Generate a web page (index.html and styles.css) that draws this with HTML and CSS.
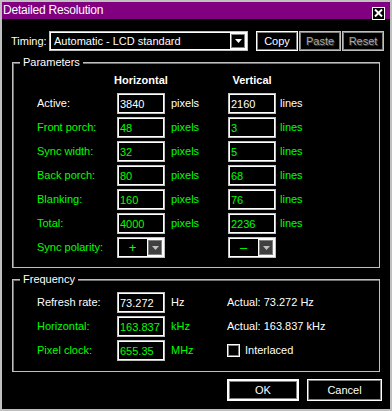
FILE: index.html
```html
<!DOCTYPE html>
<html lang="en">
  <head>
    <meta charset="UTF-8" />
    <title>Detailed Resolution</title>
    <link rel="stylesheet" href="styles.css">
  </head>
  <body>
    <div class="titlebar">
      <span class="title">Detailed Resolution</span>
      <button class="close">
        <svg width="9" height="8" viewBox="0 0 9 8"><path d="M1 0.5 L8 7.5 M8 0.5 L1 7.5" stroke="#fff" stroke-width="2"/></svg>
      </button>
    </div>

    <div class="timing">
      <span class="timing-label">Timing:</span>
      <div class="select">
        <span>Automatic - LCD standard</span>
        <span class="drop white"><svg width="7" height="4" viewBox="0 0 7 4"><path d="M0 0 H7 L3.5 4 Z" fill="#fff"/></svg></span>
      </div>
      <div class="tools">
        <button class="btn">Copy</button>
        <button class="btn disabled">Paste</button>
        <button class="btn disabled">Reset</button>
      </div>
    </div>

    <div class="group params">
      <span class="legend">Parameters</span>
      <div class="grid">
        <span></span>
        <span class="head">Horizontal</span>
        <span></span>
        <span class="head">Vertical</span>
        <span></span>

        <span class="label">Active:</span>
        <span class="field">3840</span>
        <span class="unit">pixels</span>
        <span class="field">2160</span>
        <span class="unit lines">lines</span>

        <span class="label green">Front porch:</span>
        <span class="field green">48</span>
        <span class="unit green">pixels</span>
        <span class="field green">3</span>
        <span class="unit lines green">lines</span>

        <span class="label green">Sync width:</span>
        <span class="field green">32</span>
        <span class="unit green">pixels</span>
        <span class="field green">5</span>
        <span class="unit lines green">lines</span>

        <span class="label green">Back porch:</span>
        <span class="field green">80</span>
        <span class="unit green">pixels</span>
        <span class="field green">68</span>
        <span class="unit lines green">lines</span>

        <span class="label green">Blanking:</span>
        <span class="field green">160</span>
        <span class="unit green">pixels</span>
        <span class="field green">76</span>
        <span class="unit lines green">lines</span>

        <span class="label green">Total:</span>
        <span class="field green">4000</span>
        <span class="unit green">pixels</span>
        <span class="field green">2236</span>
        <span class="unit lines green">lines</span>

        <span class="label green">Sync polarity:</span>
        <div class="combo green">
          <span class="combo-val">+</span>
          <span class="drop grey"><svg width="7" height="4" viewBox="0 0 7 4"><path d="M0 0 H7 L3.5 4 Z" fill="#c0c0c0"/></svg></span>
        </div>
        <span></span>
        <div class="combo green">
          <span class="combo-val">&ndash;</span>
          <span class="drop grey"><svg width="7" height="4" viewBox="0 0 7 4"><path d="M0 0 H7 L3.5 4 Z" fill="#c0c0c0"/></svg></span>
        </div>
        <span></span>
      </div>
    </div>

    <div class="group freq">
      <span class="legend">Frequency</span>
      <div class="grid freq-grid">
        <span class="label">Refresh rate:</span>
        <span class="field">73.272</span>
        <span class="unit">Hz</span>
        <span class="actual">Actual: 73.272 Hz</span>

        <span class="label green">Horizontal:</span>
        <span class="field green">163.837</span>
        <span class="unit green">kHz</span>
        <span class="actual">Actual: 163.837 kHz</span>

        <span class="label green">Pixel clock:</span>
        <span class="field green">655.35</span>
        <span class="unit green">MHz</span>
        <label class="actual check"><span class="box"></span>Interlaced</label>
      </div>
    </div>

    <div class="actions">
      <button class="btn ok">OK</button>
      <button class="btn cancel">Cancel</button>
    </div>
  </body>
</html>
```

FILE: styles.css
```css
body {
  margin: 0;
  width: 392px;
  height: 411px;
  box-sizing: border-box;
  border: 2px solid #c0c0c0;
  background: #000;
  color: #fff;
  font-family: "Liberation Sans", Arial, sans-serif;
  font-size: 11px;
  line-height: 13px;
}

button {
  font: inherit;
  color: inherit;
  background: #000;
  padding: 0;
}

.green {
  color: #00ff00;
}

.titlebar {
  height: 17px;
  background: #800080;
  display: flex;
  align-items: center;
  justify-content: space-between;
  padding: 0 5px 0 1px;
}

.title {
  font-size: 12px;
  letter-spacing: -0.2px;
}

.close {
  width: 13px;
  height: 13px;
  border: 1px solid #fff;
  display: flex;
  align-items: center;
  justify-content: center;
  margin-top: 5px;
}

.timing {
  display: flex;
  align-items: center;
  margin-top: 12px;
  padding-left: 9px;
  height: 20px;
}

.timing-label {
  width: 38px;
}

.select {
  width: 199px;
  height: 20px;
  box-sizing: border-box;
  border: 1px solid #c0c0c0;
  box-shadow: inset 0 0 0 1px #fff;
  display: flex;
  align-items: center;
  justify-content: space-between;
  padding: 0 1px 0 4px;
}

.drop {
  width: 16px;
  height: 16px;
  box-sizing: border-box;
  display: flex;
  align-items: center;
  justify-content: center;
}

.drop.white {
  border: 1px solid #fff;
  box-shadow: inset 0 0 0 1px #808080;
}

.drop.grey {
  height: 17px;
  border: 1px solid #fff;
  background: #404040;
  box-shadow: inset 0 0 0 1px #808080;
}

.tools {
  display: flex;
  gap: 1px;
  margin-left: 8px;
}

.btn {
  width: 42px;
  height: 20px;
  border: 1px solid #fff;
  box-shadow: inset 0 0 0 1px #808080;
}

.btn.disabled {
  border-color: #c0c0c0;
  color: #a8a8a8;
  text-shadow: 1px 1px 0 #404040;
}

.group {
  position: relative;
  margin-left: 10px;
  width: 368px;
  box-sizing: border-box;
  border: 1px solid #c0c0c0;
  box-shadow: inset 1px 1px 0 #707070;
}

.legend {
  position: absolute;
  top: -7px;
  left: 7px;
  padding: 0 3px;
  background: #000;
}

.params {
  margin-top: 11px;
  height: 206px;
  padding-top: 11px;
}

.grid {
  display: grid;
  grid-template-columns: 80px 48px 63px 48px 1fr;
  grid-template-rows: 16px repeat(7, 21px);
  row-gap: 3px;
  padding-left: 24px;
  align-items: center;
}

.head {
  font-weight: bold;
  justify-self: center;
  align-self: start;
  white-space: nowrap;
}

.field {
  height: 21px;
  box-sizing: border-box;
  border: 1px solid #c0c0c0;
  box-shadow: inset 0 0 0 1px #fff;
  padding: 4px 0 0 2px;
}

.unit {
  padding-left: 6px;
}

.unit.lines {
  padding-left: 4px;
}

.combo {
  height: 21px;
  box-sizing: border-box;
  border: 1px solid #c0c0c0;
  box-shadow: inset 0 0 0 1px #fff;
  display: flex;
  align-items: center;
  padding-right: 1px;
}

.combo-val {
  flex: 1;
  text-align: center;
  font-size: 13px;
}

.freq {
  margin-top: 11px;
  height: 93px;
  padding-top: 12px;
}

.freq-grid {
  grid-template-columns: 80px 48px 62px 1fr;
  grid-template-rows: repeat(3, 21px);
}

.check {
  display: flex;
  align-items: center;
  gap: 5px;
}

.box {
  width: 13px;
  height: 13px;
  box-sizing: border-box;
  border: 1px solid #fff;
  box-shadow: inset 0 0 0 1px #808080;
}

.actions {
  display: flex;
  justify-content: flex-end;
  gap: 8px;
  margin-top: 7px;
  padding-right: 8px;
}

.ok {
  width: 72px;
  height: 22px;
  border: 2px solid #fff;
}

.cancel {
  width: 75px;
  height: 22px;
}
```
